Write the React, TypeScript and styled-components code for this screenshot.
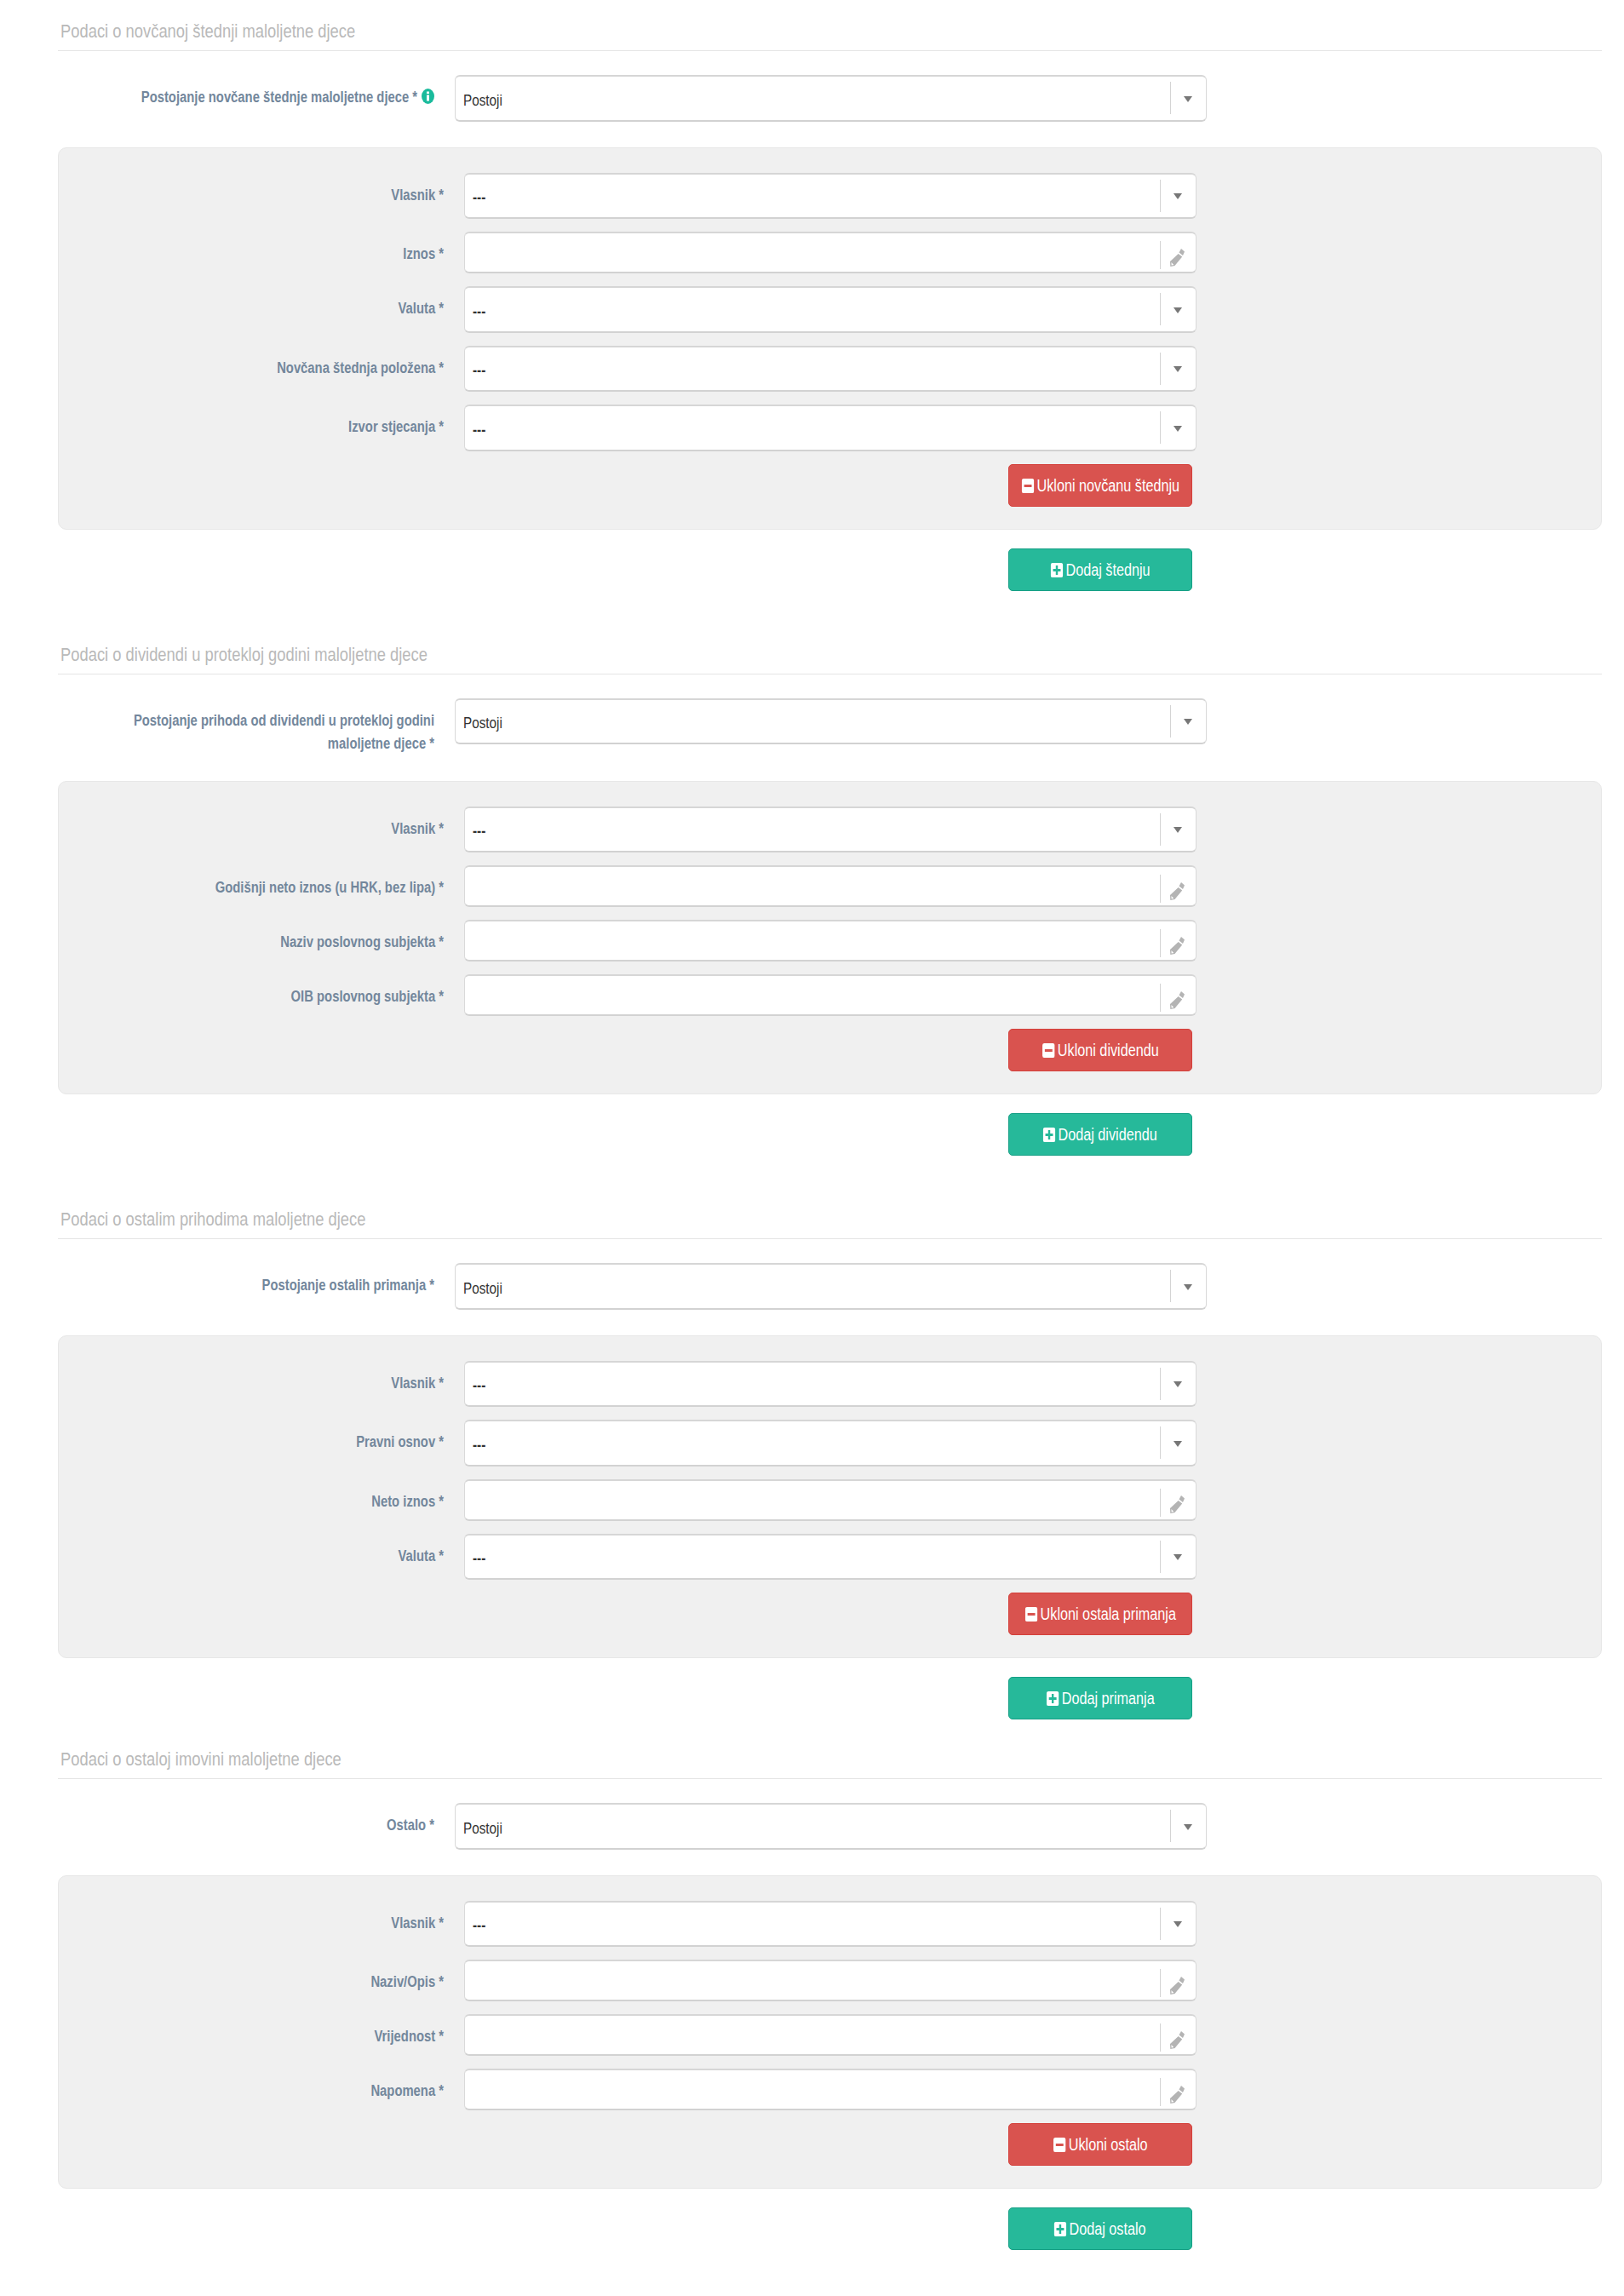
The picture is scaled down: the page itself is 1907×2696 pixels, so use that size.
import React from 'react';
import styled, { createGlobalStyle } from 'styled-components';

type FieldKind = 'select' | 'input';

interface Field {
  label: string;
  kind: FieldKind;
}

interface Section {
  title: string;
  gap: number;
  mainLabel: React.ReactNode;
  info?: boolean;
  fields: Field[];
  removeText: string;
  addText: string;
}

const sections: Section[] = [
  {
    title: 'Podaci o novčanoj štednji maloljetne djece',
    gap: 0,
    mainLabel: 'Postojanje novčane štednje maloljetne djece *',
    info: true,
    fields: [
      { label: 'Vlasnik *', kind: 'select' },
      { label: 'Iznos *', kind: 'input' },
      { label: 'Valuta *', kind: 'select' },
      { label: 'Novčana štednja položena *', kind: 'select' },
      { label: 'Izvor stjecanja *', kind: 'select' },
    ],
    removeText: 'Ukloni novčanu štednju',
    addText: 'Dodaj štednju',
  },
  {
    title: 'Podaci o dividendi u protekloj godini maloljetne djece',
    gap: 60,
    mainLabel: (
      <>
        Postojanje prihoda od dividendi u protekloj godini
        <br />
        maloljetne djece *
      </>
    ),
    fields: [
      { label: 'Vlasnik *', kind: 'select' },
      { label: 'Godišnji neto iznos (u HRK, bez lipa) *', kind: 'input' },
      { label: 'Naziv poslovnog subjekta *', kind: 'input' },
      { label: 'OIB poslovnog subjekta *', kind: 'input' },
    ],
    removeText: 'Ukloni dividendu',
    addText: 'Dodaj dividendu',
  },
  {
    title: 'Podaci o ostalim prihodima maloljetne djece',
    gap: 60,
    mainLabel: 'Postojanje ostalih primanja *',
    fields: [
      { label: 'Vlasnik *', kind: 'select' },
      { label: 'Pravni osnov *', kind: 'select' },
      { label: 'Neto iznos *', kind: 'input' },
      { label: 'Valuta *', kind: 'select' },
    ],
    removeText: 'Ukloni ostala primanja',
    addText: 'Dodaj primanja',
  },
  {
    title: 'Podaci o ostaloj imovini maloljetne djece',
    gap: 32,
    mainLabel: 'Ostalo *',
    fields: [
      { label: 'Vlasnik *', kind: 'select' },
      { label: 'Naziv/Opis *', kind: 'input' },
      { label: 'Vrijednost *', kind: 'input' },
      { label: 'Napomena *', kind: 'input' },
    ],
    removeText: 'Ukloni ostalo',
    addText: 'Dodaj ostalo',
  },
];

const GlobalStyle = createGlobalStyle`
  body {
    margin: 0;
    background: #fff;
    font-family: "Liberation Sans", Arial, sans-serif;
  }
`;

const Page = styled.div`
  width: 1813px;
  padding: 22px 0 0 68px;
`;

const SectionBlock = styled.section<{ $gap: number }>`
  margin-top: ${(p) => p.$gap}px;
`;

const SectionHeader = styled.div`
  height: 37px;
  padding-left: 3px;
  border-bottom: 1px solid #e5e5e5;
  margin-bottom: 28px;
`;

const Title = styled.h2`
  display: inline-block;
  margin: 0;
  font-size: 22px;
  font-weight: 400;
  line-height: 30px;
  color: #b9b9b9;
  white-space: nowrap;
  transform: scaleX(0.835);
  transform-origin: left center;
`;

const FormRow = styled.div<{ $inner?: boolean }>`
  display: grid;
  grid-template-columns: ${(p) => (p.$inner ? '452px 860px' : '442px 883px')};
  column-gap: 24px;
  align-items: start;
  margin-bottom: ${(p) => (p.$inner ? 15 : 30)}px;
`;

const FieldLabel = styled.label`
  display: flex;
  justify-content: flex-end;
  align-items: center;
  gap: 5px;
  padding-top: 13px;
  text-align: right;
  color: #73879c;
  font-size: 18px;
  font-weight: 700;
  line-height: 27px;
`;

const LabelText = styled.span`
  display: inline-block;
  white-space: nowrap;
  transform: scaleX(0.823);
  transform-origin: right center;
`;

const InfoIcon = styled.svg`
  flex: none;
  width: 15px;
  height: 18px;
  margin: -3px 0 0 0;
`;

const Control = styled.div<{ $kind: FieldKind }>`
  display: flex;
  box-sizing: border-box;
  height: ${(p) => (p.$kind === 'select' ? '54.5px' : '49px')};
  align-items: center;
  background: #fff;
  border: 1px solid #d9d9d9;
  border-top: 2px solid #d6d6d6;
  border-bottom: 2px solid #d2d2d2;
  border-radius: 6px;
`;

const Value = styled.div`
  flex: 1;
  padding: 5px 0 0 8.5px;
`;

const ValueText = styled.span<{ $placeholder?: boolean }>`
  display: inline-block;
  font-size: 18px;
  font-weight: ${(p) => (p.$placeholder ? 700 : 400)};
  line-height: 22px;
  color: #333;
  transform: scaleX(0.85);
  transform-origin: left center;
`;

const Divider = styled.span<{ $kind: FieldKind }>`
  flex: none;
  width: 1px;
  height: ${(p) => (p.$kind === 'select' ? '38px' : '33px')};
  margin-top: ${(p) => (p.$kind === 'select' ? '0' : '6px')};
  background: #d4d4d4;
`;

const Addon = styled.span`
  flex: none;
  width: 41px;
  padding-right: 2px;
  box-sizing: border-box;
  display: flex;
  justify-content: center;
  align-items: center;
`;

const Caret = styled.svg`
  width: 10px;
  height: 7px;
  margin-top: 2px;
`;

const Pencil = styled.svg`
  width: 17px;
  height: 21px;
  margin-top: 11px;
`;

const Panel = styled.div`
  box-sizing: border-box;
  width: 1813px;
  padding: 29px 0 26px;
  background: #f0f0f0;
  border: 1px solid #e7e7e7;
  border-radius: 10px;
`;

const ButtonRow = styled.div<{ $outer?: boolean }>`
  padding-left: ${(p) => (p.$outer ? 1116 : 1115)}px;
  margin-top: ${(p) => (p.$outer ? 22 : 0)}px;
`;

const ActionButton = styled.button<{ $variant: 'danger' | 'success' }>`
  display: flex;
  justify-content: center;
  align-items: center;
  box-sizing: border-box;
  width: 216px;
  height: 50px;
  padding: 1px 0 0;
  color: #fff;
  font-family: inherit;
  font-size: 20px;
  background: ${(p) => (p.$variant === 'danger' ? '#d9534f' : '#26b99a')};
  border: 1px solid ${(p) => (p.$variant === 'danger' ? '#d43f3a' : '#169f85')};
  border-radius: 5px;
`;

const ButtonInner = styled.span`
  display: inline-flex;
  align-items: center;
  gap: 4px;
  white-space: nowrap;
  transform: scaleX(0.81);
`;

const ButtonIcon = styled.svg`
  width: 18px;
  height: 17px;
`;

const Arrow = () => (
  <Caret viewBox="0 0 10 7">
    <path d="M0 0h10L5 7z" fill="#777" />
  </Caret>
);

const FieldControl = ({ kind }: { kind: FieldKind }) => (
  <Control $kind={kind}>
    <Value>{kind === 'select' && <ValueText $placeholder>---</ValueText>}</Value>
    <Divider $kind={kind} />
    <Addon>
      {kind === 'select' ? (
        <Arrow />
      ) : (
        <Pencil viewBox="0 0 17 21">
          <path
            d="M13 0l4 3.5-2 4.5-4.5-3.5zM9.7 6l4.5 3.5L5.5 20 .3 21 0 15zM1.5 16l.1 3.4 2.7-.5z"
            fill="#b4b4b4"
            fillRule="evenodd"
          />
        </Pencil>
      )}
    </Addon>
  </Control>
);

const SquareIcon = ({ plus, color }: { plus: boolean; color: string }) => (
  <ButtonIcon viewBox="0 0 18 17" preserveAspectRatio="none">
    <rect width="18" height="17" rx="2.5" fill="#fff" />
    <rect x="3.5" y="7" width="11" height="3" fill={color} />
    {plus && <rect x="7.5" y="3" width="3" height="11" fill={color} />}
  </ButtonIcon>
);

export default function App() {
  return (
    <Page>
      <GlobalStyle />
      {sections.map((section) => (
        <SectionBlock key={section.title} $gap={section.gap}>
          <SectionHeader>
            <Title>{section.title}</Title>
          </SectionHeader>

          <FormRow>
            <FieldLabel>
              <LabelText>{section.mainLabel}</LabelText>
              {section.info && (
                <InfoIcon viewBox="0 0 15 18" preserveAspectRatio="none">
                  <ellipse cx="7.5" cy="9" rx="7.5" ry="9" fill="#1abb9c" />
                  <rect x="6" y="3.5" width="3" height="2.5" fill="#fff" />
                  <rect x="6" y="7.5" width="3" height="7" fill="#fff" />
                </InfoIcon>
              )}
            </FieldLabel>
            <Control $kind="select">
              <Value>
                <ValueText>Postoji</ValueText>
              </Value>
              <Divider $kind="select" />
              <Addon>
                <Arrow />
              </Addon>
            </Control>
          </FormRow>

          <Panel>
            {section.fields.map((field) => (
              <FormRow $inner key={field.label}>
                <FieldLabel>
                  <LabelText>{field.label}</LabelText>
                </FieldLabel>
                <FieldControl kind={field.kind} />
              </FormRow>
            ))}
            <ButtonRow>
              <ActionButton $variant="danger">
                <ButtonInner>
                  <SquareIcon plus={false} color="#d9534f" />
                  {section.removeText}
                </ButtonInner>
              </ActionButton>
            </ButtonRow>
          </Panel>

          <ButtonRow $outer>
            <ActionButton $variant="success">
              <ButtonInner>
                <SquareIcon plus color="#26b99a" />
                {section.addText}
              </ButtonInner>
            </ActionButton>
          </ButtonRow>
        </SectionBlock>
      ))}
    </Page>
  );
}
